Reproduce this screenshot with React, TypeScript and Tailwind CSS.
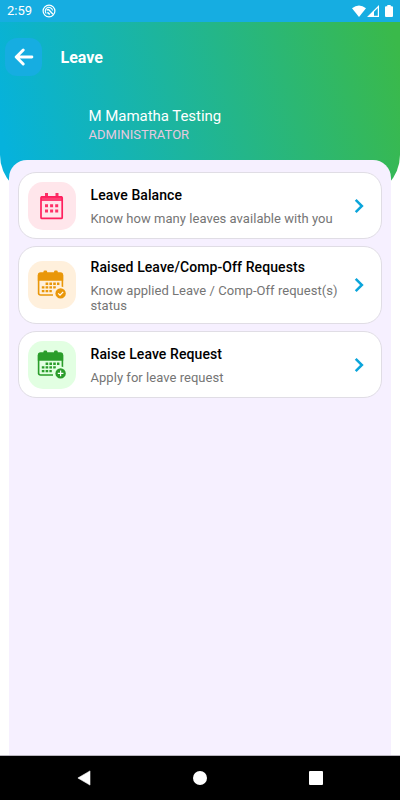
import React from 'react';

interface MenuItem {
    title: string;
    description: string;
    tile: string;
    card: string;
    textClass: string;
    icon: React.ReactNode;
}

const BalanceIcon = () => (
    <svg viewBox="0 0 48 48" className="w-12 h-12">
        <path d="M17 11h3v4h-3zM27.5 11h3v4h-3z" fill="#fb3068" />
        <path d="M13 14h21v5H13z" fill="#ff4075" />
        <rect x="13" y="14.8" width="21.2" height="21.6" rx="1" fill="none" stroke="#ff1f5e" strokeWidth="1.7" />
        <path d="M17 22.2h3v3h-3zM22.1 22.2h3v3h-3zM27.2 22.2h3v3h-3zM17 27.4h3v3h-3zM22.1 27.4h3v3h-3zM27.2 27.4h3v3h-3z" fill="#ff3068" />
    </svg>
);

const CalendarBadgeIcon = ({ color, tile, badge }: { color: string; tile: string; badge: string }) => (
    <svg viewBox="0 0 48 48" className="w-12 h-12">
        <path d="M10.6 33V14M34.4 14v12.5M10.6 32q0 2 2 2H25" fill="none" stroke={color} strokeWidth="1.6" />
        <path d="M9.8 19.7V14q0-2.8 2.8-2.8h19.8q2.8 0 2.8 2.8v5.7z" fill={color} />
        <rect x="15.4" y="9.5" width="3.8" height="4.3" rx="1.4" fill={color} />
        <rect x="26" y="9.5" width="3.8" height="4.3" rx="1.4" fill={color} />
        <path d="M17.6 21.6h2.6v2.3h-2.6zM21.4 21.6H24v2.3h-2.6zM25.2 21.6h2.6v2.3h-2.6zM29 21.6h2.4v2.3H29zM13.8 25.2h2.6v2.4h-2.6zM17.6 25.2h2.6v2.4h-2.6zM21.4 25.2H24v2.4h-2.6zM25.2 25.2h2.6v2.4h-2.6zM13.8 28.9h2.6v2.3h-2.6zM17.6 28.9h2.6v2.3h-2.6zM21.4 28.9h2.4v2.3h-2.4z" fill={color} />
        <circle cx="32.6" cy="32.4" r="6.8" fill={tile} />
        <circle cx="32.6" cy="32.4" r="5.2" fill={color} />
        <path d={badge} fill="none" stroke="#fff" strokeWidth="1.2" />
    </svg>
);

const items: MenuItem[] = [
    {
        title: 'Leave Balance',
        description: 'Know how many leaves available with you',
        tile: 'bg-[#ffe6eb]',
        card: 'h-[67px]',
        textClass: 'pt-[13px]',
        icon: <BalanceIcon />,
    },
    {
        title: 'Raised Leave/Comp-Off Requests',
        description: 'Know applied Leave / Comp-Off request(s) status',
        tile: 'bg-[#fff0dc]',
        card: 'h-[78px]',
        textClass: 'pt-[11px]',
        icon: <CalendarBadgeIcon color="#e99709" tile="#fff0dc" badge="m30.2 32.4 1.8 1.8 3.2-3.4" />,
    },
    {
        title: 'Raise Leave Request',
        description: 'Apply for leave request',
        tile: 'bg-[#e2ffe2]',
        card: 'h-[67px]',
        textClass: 'pt-[13px]',
        icon: <CalendarBadgeIcon color="#2b9d2b" tile="#e2ffe2" badge="M29.8 32.4h5.6M32.6 29.6v5.6" />,
    },
];

const StatusBar = () => (
    <div className="h-[22px] bg-[#16ade1] flex items-center pl-[7px] pr-[7px] text-white">
        <span className="text-[13px] leading-[22px]">2:59</span>
        <svg viewBox="0 0 14 14" className="w-[14px] h-[14px] ml-[10px]" fill="none" stroke="#fff">
            <circle cx="7" cy="7" r="5.9" strokeWidth="1.2" />
            <path d="M4.2 9.5A3.7 3.7 0 0 1 5 3.9a3.7 3.7 0 0 1 5.6 2.6" strokeWidth="1.1" />
            <path d="m4.6 6 2-.4 4.4 4.6M5.4 8.4l2.4 2" strokeWidth="1.4" />
        </svg>
        <div className="ml-auto flex items-center">
            <svg viewBox="0 0 14 12" className="w-[14px] h-[12px]">
                <path d="M0 3.2Q7-2.2 14 3.2L7 12z" fill="#fff" />
            </svg>
            <svg viewBox="0 0 12 12" className="w-[12px] h-[12px] ml-[1px]">
                <path d="M12 0v12H0zM10.8 2.9 7 6.7v4.1h3.8z" fill="#fff" fillRule="evenodd" />
            </svg>
            <svg viewBox="0 0 8 12" className="w-[8px] h-[12px] ml-[6px]">
                <path d="M2.3 0h3.4v1.2H7q1 0 1 1V11q0 1-1 1H1q-1 0-1-1V2.2q0-1 1-1h1.3z" fill="#fff" />
            </svg>
        </div>
    </div>
);

const MenuCard = ({ item }: { item: MenuItem }) => (
    <button className={`w-full flex items-center text-left bg-white border border-[#e0dde5] rounded-[18px] pl-[9px] pr-[15px] ${item.card}`}>
        <div className={`w-12 h-12 rounded-[15px] shrink-0 ${item.tile}`}>{item.icon}</div>
        <div className={`self-stretch w-[256px] ml-[14.5px] shrink-0 ${item.textClass}`}>
            <h2 className="text-[14px] leading-[18px] font-medium text-black tracking-[0.09px] whitespace-nowrap">{item.title}</h2>
            <p className="mt-[7px] text-[13px] leading-[15px] text-[#757575] tracking-[0.04px]">{item.description}</p>
        </div>
        <svg viewBox="0 0 10 16" className="w-[10px] h-[16px] ml-auto mr-[2px] shrink-0">
            <path d="m1.7 1.8 6.2 6.2-6.2 6.2" fill="none" stroke="#0ba5db" strokeWidth="2.5" />
        </svg>
    </button>
);

export default function App() {
    return (
        <div className="w-[400px] h-[800px] flex flex-col overflow-hidden bg-white font-['Roboto',sans-serif]">
            <StatusBar />

            <header className="h-[175px] shrink-0 rounded-b-[42px] bg-[linear-gradient(75deg,#06b2dc_4%,#3ab94a_98%)]">
                <div className="flex items-center pl-[5px] pt-[16px]">
                    <button className="w-[37px] h-[38px] rounded-[12px] bg-[#16ade1] flex items-center justify-center">
                        <svg viewBox="0 0 20 18" className="w-[20px] h-[18px]" fill="none" stroke="#fff" strokeWidth="2.9" strokeLinecap="round" strokeLinejoin="round">
                            <path d="M9.2 2 2.2 9l7 7M2.7 9h15.2" />
                        </svg>
                    </button>
                    <h1 className="ml-[18.5px] pt-[2px] text-[16px] leading-[20px] font-bold text-white">Leave</h1>
                </div>
                <div className="pl-[88.5px] pt-[30px]">
                    <p className="text-[15px] leading-[20px] text-white tracking-[-0.04px]">M Mamatha Testing</p>
                    <p className="pt-px text-[13px] leading-[16px] text-[#e6c9df] tracking-[0.02px]">ADMINISTRATOR</p>
                </div>
            </header>

            <main className="-mt-[37px] mx-[9px] flex-1 rounded-t-[18px] bg-[#f6f0ff] pt-[12px] px-[9px] flex flex-col gap-[7px]">
                {items.map((item) => (
                    <MenuCard key={item.title} item={item} />
                ))}
            </main>

            <nav className="h-[45px] shrink-0 bg-black border-t border-[#b9b6be] flex items-center">
                <div className="w-[167px] flex justify-center">
                    <svg viewBox="0 0 14 16" className="w-[14px] h-[16px]">
                        <path d="M13 .9v14.2L.9 8z" fill="#fff" stroke="#fff" strokeWidth=".6" strokeLinejoin="round" />
                    </svg>
                </div>
                <div className="w-[66px] flex justify-center">
                    <span className="w-[14px] h-[14px] rounded-full bg-white" />
                </div>
                <div className="w-[165px] flex justify-center">
                    <span className="w-[14px] h-[14px] rounded-[1px] bg-white" />
                </div>
            </nav>
        </div>
    );
}
